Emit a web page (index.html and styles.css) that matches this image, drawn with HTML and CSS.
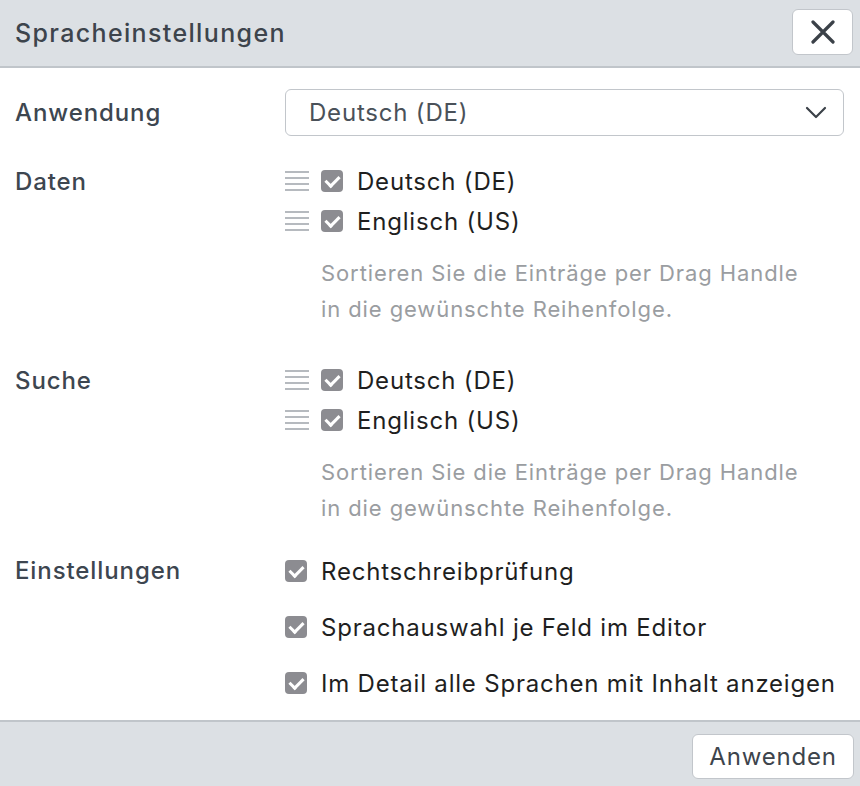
FILE: index.html
```html
<!DOCTYPE html>
<html lang="de">
<head>
<meta charset="utf-8">
<link rel="stylesheet" href="styles.css">
</head>
<body>
<div class="dialog">
  <header class="header">
    <h1 class="title">Spracheinstellungen</h1>
    <button class="close" aria-label="Schließen">
      <svg width="24" height="24" viewBox="0 0 24 24"><path d="M2 2 L22 22 M22 2 L2 22" stroke="#3b4148" stroke-width="3.2" stroke-linecap="round"/></svg>
    </button>
  </header>
  <main class="content">
    <div class="row row-select">
      <div class="label">Anwendung</div>
      <div class="value">
        <div class="select">
          <span>Deutsch (DE)</span>
          <svg width="22" height="13" viewBox="0 0 22 13"><path d="M2 2 L11 11 L20 2" fill="none" stroke="#3b4148" stroke-width="2.2" stroke-linecap="round" stroke-linejoin="round"/></svg>
        </div>
      </div>
    </div>
    <div class="row row-daten">
      <div class="label lh40">Daten</div>
      <div class="value">
        <div class="item"><span class="handle"></span><span class="cb"></span><span>Deutsch (DE)</span></div>
        <div class="item"><span class="handle"></span><span class="cb"></span><span>Englisch (US)</span></div>
        <p class="hint">Sortieren Sie die Einträge per Drag Handle<br>in die gewünschte Reihenfolge.</p>
      </div>
    </div>
    <div class="row row-suche">
      <div class="label lh40">Suche</div>
      <div class="value">
        <div class="item"><span class="handle"></span><span class="cb"></span><span>Deutsch (DE)</span></div>
        <div class="item"><span class="handle"></span><span class="cb"></span><span>Englisch (US)</span></div>
        <p class="hint">Sortieren Sie die Einträge per Drag Handle<br>in die gewünschte Reihenfolge.</p>
      </div>
    </div>
    <div class="row row-settings">
      <div class="label lh40 flat">Einstellungen</div>
      <div class="value settings">
        <div class="item"><span class="cb"></span><span>Rechtschreibprüfung</span></div>
        <div class="item"><span class="cb"></span><span>Sprachauswahl je Feld im Editor</span></div>
        <div class="item"><span class="cb"></span><span>Im Detail alle Sprachen mit Inhalt anzeigen</span></div>
      </div>
    </div>
  </main>
  <footer class="footer">
    <button class="apply">Anwenden</button>
  </footer>
</div>
</body>
</html>
```

FILE: styles.css
```css
* { box-sizing: border-box; }
html, body { margin: 0; padding: 0; background: #fff; }
body {
  font-family: Inter, "Liberation Sans", Arial, sans-serif;
  width: 860px;
  height: 786px;
  overflow: hidden;
}
.dialog { display: flex; flex-direction: column; height: 786px; }
.header {
  height: 68px;
  background: #dce0e4;
  border-bottom: 2px solid #c0c5ca;
  display: flex;
  align-items: center;
  justify-content: space-between;
  padding: 0 7px 0 15px;
}
.title {
  margin: 0;
  font-size: 25px;
  font-weight: 500;
  color: #3d444c;
  letter-spacing: 1.35px;
}
.close {
  width: 61px;
  height: 46px;
  background: #fff;
  border: 1.5px solid #c2c6cb;
  border-radius: 6px;
  display: flex;
  align-items: center;
  justify-content: center;
  padding: 0;
  margin-top: -2px;
}
.content {
  flex: 1;
  padding: 21px 15px 0 15px;
}
.row { display: flex; }
.label {
  width: 270px;
  flex: none;
  font-size: 24px;
  font-weight: 500;
  color: #3d4650;
  letter-spacing: 0.9px;
}
.lh40 { line-height: 40px; margin-top: 1px; }
.lh40.flat { margin-top: 0; }
.value { flex: 1; }
.row-select { align-items: center; }
.select {
  width: 559px;
  height: 47px;
  border: 1.5px solid #c2c6cb;
  border-radius: 6px;
  display: flex;
  align-items: center;
  justify-content: space-between;
  padding: 0 16px 0 23px;
  font-size: 24px;
  letter-spacing: 0.8px;
  color: #4a5159;
}
.row-daten { margin-top: 25px; }
.row-suche { margin-top: 33px; }
.row-settings { margin-top: 25px; }
.item {
  height: 40px;
  display: flex;
  align-items: center;
  font-size: 24px;
  letter-spacing: 0.8px;
  color: #1f1f1f;
}
.settings { display: flex; flex-direction: column; gap: 16px; }
.handle {
  width: 24px;
  height: 20px;
  margin-right: 12px;
  background: repeating-linear-gradient(to bottom, #b6babf 0, #b6babf 2px, transparent 2px, transparent 6px);
  flex: none;
}
.cb {
  width: 22px;
  height: 22px;
  border-radius: 4px;
  background: #8c8c91;
  margin-right: 14px;
  flex: none;
  position: relative;
}
.cb::after {
  content: "";
  position: absolute;
  left: 7px;
  top: 3px;
  width: 6px;
  height: 11px;
  border-right: 3px solid #fff;
  border-bottom: 3px solid #fff;
  transform: rotate(45deg);
}
.hint {
  margin: 14px 0 0 36px;
  font-size: 22px;
  letter-spacing: 0.9px;
  line-height: 36px;
  color: #9a9da1;
}
.footer {
  height: 66px;
  background: #dce0e4;
  border-top: 2px solid #c0c5ca;
  display: flex;
  justify-content: flex-end;
  align-items: flex-start;
  padding: 12px 6px 0 0;
}
.apply {
  width: 162px;
  height: 45px;
  background: #fff;
  border: 1.5px solid #c2c6cb;
  border-radius: 6px;
  font-family: Inter, "Liberation Sans", Arial, sans-serif;
  font-size: 24px;
  letter-spacing: 0.8px;
  color: #3d444c;
}
```
